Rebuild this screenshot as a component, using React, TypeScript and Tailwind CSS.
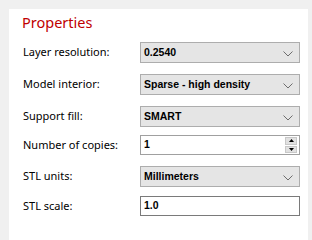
import React from "react";

const Chevron = () => (
  <svg width="10" height="6" viewBox="0 0 10 6" className="absolute right-[6px] top-[8px]">
    <path d="M0.5 0.5 L5 5 L9.5 0.5" fill="none" stroke="#6d6d6d" strokeWidth="1" />
  </svg>
);

const Select = ({ value }: { value: string }) => (
  <div className="relative shrink-0 w-[160px] h-full bg-[#e5e5e5] border border-[#adadad] flex items-center pl-[3px] text-[10.5px] font-bold text-black" style={{ fontFamily: "'Liberation Sans', Arial, sans-serif" }}>
    {value}
    <Chevron />
  </div>
);

const Label = ({ text }: { text: string }) => (
  <div className="shrink-0 w-[131px] pl-[14px] whitespace-nowrap text-[11px] text-black" style={{ fontFamily: "'Noto Sans', sans-serif" }}>
    {text}
  </div>
);

export default function App() {
  return (
    <div className="w-[312px] h-[240px] bg-[#f0f0f0] pt-[9px] pl-[9px] overflow-hidden">
      <div className="w-[299px] h-[231px] bg-white flex flex-col">
        <div className="h-[33px] pl-[13px] pt-[2px] text-[14.5px] leading-[22px] text-[#c00000]" style={{ fontFamily: "'Noto Sans', sans-serif" }}>
          Properties
        </div>
        <div className="flex items-center h-[21px]">
          <Label text="Layer resolution:" />
          <Select value="0.2540" />
        </div>
        <div className="flex items-center h-[21px] mt-[11px]">
          <Label text="Model interior:" />
          <Select value="Sparse - high density" />
        </div>
        <div className="flex items-center h-[21px] mt-[11px]">
          <Label text="Support fill:" />
          <Select value="SMART" />
        </div>
        <div className="flex items-center h-[20px] mt-[8px]">
          <Label text="Number of copies:" />
          <div className="relative shrink-0 w-[160px] h-full bg-white border border-[#a0a0a0] flex items-center pl-[3px] text-[10.5px] font-bold text-black" style={{ fontFamily: "'Liberation Sans', Arial, sans-serif" }}>
            1
            <div className="absolute right-[2px] top-[1px] bottom-[1px] w-[12px] flex flex-col gap-[1px]">
              <div className="flex-1 bg-[#e1e1e1] border border-[#c8c8c8] flex items-center justify-center">
                <svg width="5" height="3" viewBox="0 0 5 3"><path d="M2.5 0 L5 3 L0 3 Z" fill="#000" /></svg>
              </div>
              <div className="flex-1 bg-[#e1e1e1] border border-[#c8c8c8] flex items-center justify-center">
                <svg width="5" height="3" viewBox="0 0 5 3"><path d="M0 0 L5 0 L2.5 3 Z" fill="#000" /></svg>
              </div>
            </div>
          </div>
        </div>
        <div className="flex items-center h-[21px] mt-[11px]">
          <Label text="STL units:" />
          <Select value="Millimeters" />
        </div>
        <div className="flex items-center h-[20px] mt-[9px]">
          <Label text="STL scale:" />
          <div className="shrink-0 w-[160px] h-full bg-white border border-[#7a7a7a] flex items-center pl-[3px] text-[10.5px] font-bold text-black" style={{ fontFamily: "'Liberation Sans', Arial, sans-serif" }}>
            1.0
          </div>
        </div>
      </div>
    </div>
  );
}
